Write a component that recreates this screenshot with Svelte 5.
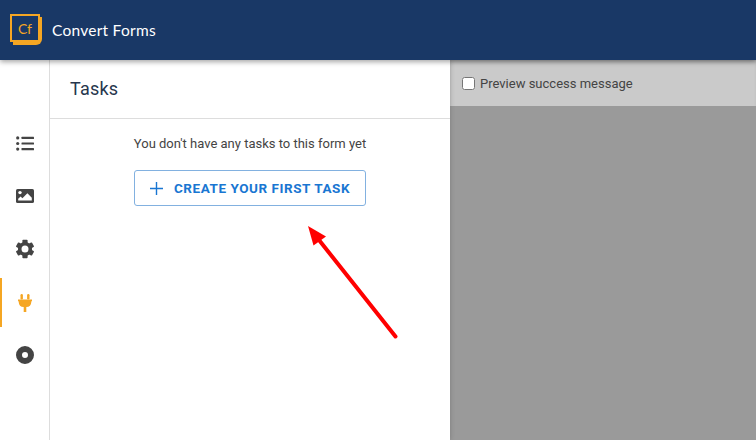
<script>
    const navItems = [
        { name: 'fields', active: false },
        { name: 'design', active: false },
        { name: 'settings', active: false },
        { name: 'tasks', active: true },
        { name: 'publish', active: false }
    ];

    // six teeth around the gear hub
    const teeth = [0, 60, 120, 180, 240, 300];
</script>

<div class="app">
    <header class="topbar">
        <div class="logo">
            <span class="logo-back"></span>
            <span class="logo-box">Cf</span>
        </div>
        <span class="brand">Convert Forms</span>
    </header>

    <div class="main">
        <nav class="sidebar">
            {#each navItems as item}
                <div class="nav-item" class:active={item.active}>
                    {#if item.name === 'fields'}
                        <svg width="18" height="15" viewBox="0 0 18 15">
                            <circle cx="1.7" cy="1.900" r="1.600" fill="#444" />
                            <circle cx="1.7" cy="7.500" r="1.600" fill="#444" />
                            <circle cx="1.7" cy="13.100" r="1.600" fill="#444" />
                            <rect x="5.500" y="0.800" width="12.500" height="2.200" rx="0.500" fill="#444" />
                            <rect x="5.500" y="6.400" width="12.500" height="2.200" rx="0.500" fill="#444" />
                            <rect x="5.500" y="12" width="12.500" height="2.200" rx="0.500" fill="#444" />
                        </svg>
                    {:else if item.name === 'design'}
                        <svg width="18" height="14" viewBox="0 0 18 14">
                            <rect width="18" height="14" rx="1.600" fill="#444" />
                            <circle cx="4" cy="3.600" r="1.700" fill="#fff" />
                            <path d="M2.200 11.600V9.800l2.400-2.300 1.800 1.800 5-5 4.400 4.400v2.900z" fill="#fff" />
                        </svg>
                    {:else if item.name === 'settings'}
                        <svg width="20" height="20" viewBox="0 0 20 20">
                            {#each teeth as angle}
                                <rect x="7.400" y="0.800" width="5.200" height="5" rx="0.800" fill="#444" transform="rotate({angle} 10 10)" />
                            {/each}
                            <circle cx="10" cy="10" r="5.300" fill="none" stroke="#444" stroke-width="3.600" />
                        </svg>
                    {:else if item.name === 'tasks'}
                        <svg width="14" height="18" viewBox="0 0 14 18">
                            <rect x="2.500" y="0" width="2.400" height="5.500" rx="1.200" fill="#f5a623" />
                            <rect x="9.100" y="0" width="2.400" height="5.500" rx="1.200" fill="#f5a623" />
                            <path d="M0 5.500h14v1.800h-.7v.7a5.300 5.300 0 0 1-5 5.100V18H5.700v-4.900a5.300 5.300 0 0 1-5-5.100v-.7H0z" fill="#f5a623" />
                        </svg>
                    {:else}
                        <svg width="18" height="18" viewBox="0 0 18 18">
                            <circle cx="9" cy="9" r="6" fill="none" stroke="#444" stroke-width="6" />
                        </svg>
                    {/if}
                </div>
            {/each}
        </nav>

        <section class="panel">
            <h1 class="panel-title">Tasks</h1>
            <div class="panel-body">
                <p class="empty">You don't have any tasks to this form yet</p>
                <button class="create">
                    <svg width="13" height="13" viewBox="0 0 13 13">
                        <path d="M6.500 0v13M0 6.500h13" stroke="#1976d2" stroke-width="1.400" fill="none" />
                    </svg>
                    <span>CREATE YOUR FIRST TASK</span>
                </button>
            </div>
        </section>

        <section class="preview">
            <label class="preview-bar">
                <input type="checkbox" />
                <span>Preview success message</span>
            </label>
            <div class="preview-body"></div>
        </section>
    </div>

    <svg class="arrow" width="110" height="125" viewBox="0 0 110 125">
        <path d="M95.500 116.500L19 20" stroke="#ff0000" stroke-width="4" stroke-linecap="round" fill="none" />
        <path d="M8 6L26 16.500L13.500 25.500z" fill="#ff0000" />
    </svg>
</div>

<style>
    :global(body) {
        margin: 0;
        font-family: Roboto, "Liberation Sans", sans-serif;
    }

    .app {
        position: relative;
        width: 756px;
        height: 440px;
        overflow: hidden;
        background: #fff;
    }

    .topbar {
        position: relative;
        z-index: 2;
        height: 60px;
        display: flex;
        align-items: center;
        gap: 10px;
        padding-left: 10px;
        box-sizing: border-box;
        background: #193866;
        box-shadow: 0 2px 5px rgba(0, 0, 0, 0.35);
    }

    .logo {
        position: relative;
        width: 32px;
        height: 31px;
        margin-top: -1px;
    }

    .logo-box {
        position: absolute;
        left: 0;
        top: 0;
        width: 30px;
        height: 28px;
        box-sizing: border-box;
        border: 2px solid #f5a623;
        color: #f5a623;
        font-family: Lato, sans-serif;
        font-size: 14px;
        line-height: 25px;
        text-align: center;
    }

    .logo-back {
        position: absolute;
        right: 0;
        bottom: 0;
        width: 29px;
        height: 28px;
        box-sizing: border-box;
        border-right: 3px solid #f5a623;
        border-bottom: 3px solid #f5a623;
        border-bottom-right-radius: 6px;
    }

    .brand {
        color: #fff;
        font-family: Lato, sans-serif;
        font-size: 15.5px;
        letter-spacing: 0.25px;
        margin-top: -1px;
    }

    .main {
        display: flex;
        height: 380px;
    }

    .sidebar {
        width: 50px;
        box-sizing: border-box;
        border-right: 1px solid #ddd;
        padding-top: 57px;
        display: flex;
        flex-direction: column;
    }

    .nav-item {
        height: 53px;
        box-sizing: border-box;
        display: flex;
        align-items: center;
        justify-content: center;
        border-left: 2px solid transparent;
        padding: 0 2px 1px 0;
    }

    .nav-item.active {
        border-left-color: #f5a623;
        height: 49px;
        margin: 2px 0;
        padding-bottom: 0;
    }

    .panel {
        position: relative;
        width: 400px;
        background: #fff;
        box-shadow: 0 0 5px rgba(0, 0, 0, 0.2);
        clip-path: inset(0 -10px 0 0);
    }

    .panel-title {
        margin: 0;
        height: 59px;
        box-sizing: border-box;
        border-bottom: 1px solid #ddd;
        padding: 18px 0 0 20px;
        font-size: 18px;
        font-weight: 400;
        color: #26364d;
        letter-spacing: 0.2px;
    }

    .panel-body {
        display: flex;
        flex-direction: column;
        align-items: center;
    }

    .empty {
        margin: 17px 0 0;
        font-size: 13px;
        line-height: 16px;
        color: #444;
    }

    .create {
        margin-top: 18px;
        width: 232px;
        height: 36px;
        display: flex;
        align-items: center;
        justify-content: center;
        gap: 11px;
        padding: 0;
        background: #fff;
        border: 1px solid #82b1e0;
        border-radius: 3px;
        color: #1976d2;
        font-family: inherit;
        font-size: 13.5px;
        font-weight: 700;
        letter-spacing: 0.55px;
    }

    .preview {
        flex: 1;
        display: flex;
        flex-direction: column;
    }

    .preview-bar {
        height: 46px;
        display: flex;
        align-items: center;
        gap: 5px;
        padding-left: 12px;
        background: #cacaca;
        font-size: 13px;
        color: #444;
        box-shadow: inset 0 3px 4px -2px rgba(0, 0, 0, 0.2);
    }

    .preview-bar input {
        margin: 0;
        width: 13px;
        height: 13px;
    }

    .preview-body {
        flex: 1;
        background: #9a9a9a;
    }

    .arrow {
        position: absolute;
        left: 300px;
        top: 220px;
    }
</style>
